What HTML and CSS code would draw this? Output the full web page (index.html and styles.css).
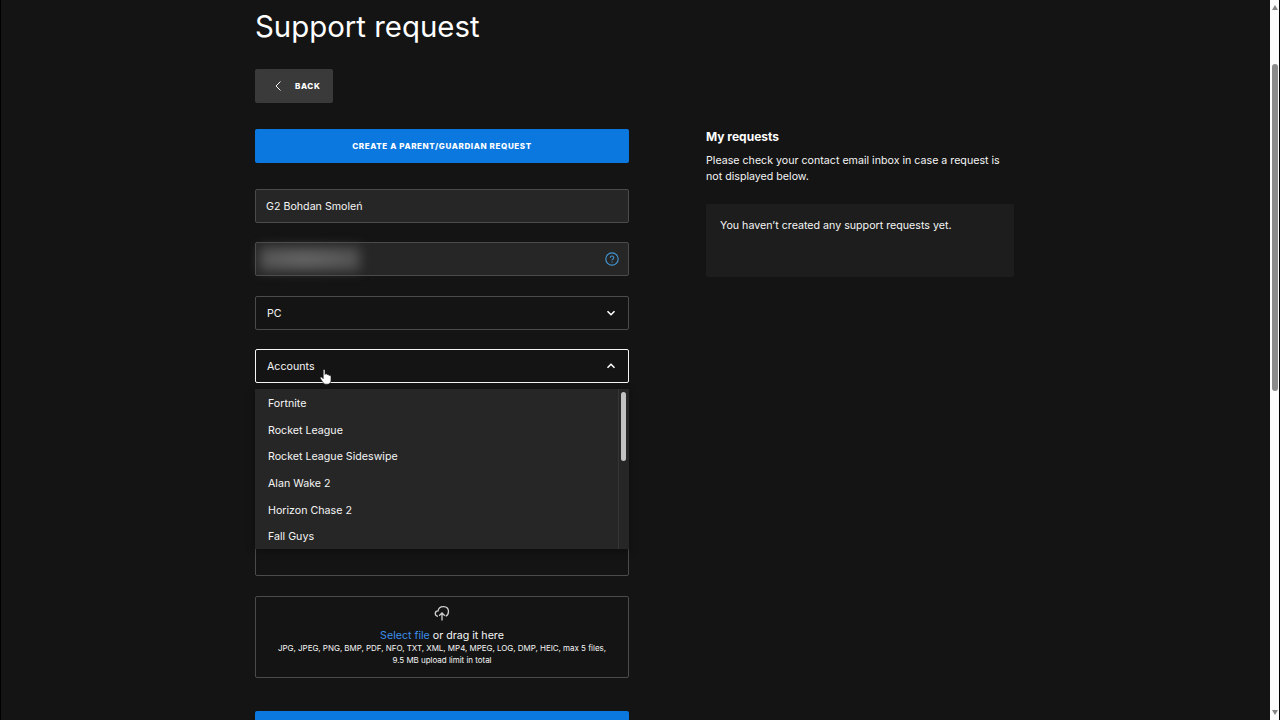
FILE: index.html
```html
<!DOCTYPE html>
<html lang="en">
  <head>
    <meta charset="UTF-8" />
    <meta name="viewport" content="width=device-width, initial-scale=1.0" />
    <title>Support request</title>
    <link rel="stylesheet" href="styles.css" />
  </head>
  <body>
    <div class="window">
      <main class="page">
        <h1 class="heading">Support request</h1>
        <button type="button" class="back-button">
          <svg class="back-icon" viewBox="0 0 8 12"><path d="M6.500 1.500 2 6l4.500 4.500" /></svg>
          <span>BACK</span>
        </button>

        <div class="columns">
          <form class="request-form">
            <button type="button" class="primary-button">CREATE A PARENT/GUARDIAN REQUEST</button>
            <div class="field filled">
              <span>G2 Bohdan Smoleń</span>
            </div>
            <div class="field filled">
              <div class="redacted"></div>
              <svg class="help-icon" viewBox="0 0 14 14">
                <circle cx="7" cy="7" r="6.200" />
                <path d="M5.300 5.700a1.700 1.700 0 1 1 2.500 1.500c-.6.300-.8.500-.8 1.100M7 9.500v1" />
              </svg>
            </div>
            <div class="field select">
              <span>PC</span>
              <svg class="chevron" viewBox="0 0 10 8"><path d="M1.500 2.300 5 5.700l3.500-3.400" /></svg>
            </div>
            <div class="field select open">
              <span>Accounts</span>
              <svg class="chevron" viewBox="0 0 10 8"><path d="M1.500 5.700 5 2.300l3.500 3.400" /></svg>
              <div class="menu">
                <ul class="options">
                  <li>Fortnite</li>
                  <li>Rocket League</li>
                  <li>Rocket League Sideswipe</li>
                  <li>Alan Wake 2</li>
                  <li>Horizon Chase 2</li>
                  <li>Fall Guys</li>
                </ul>
                <div class="menu-scroll"><div class="menu-thumb"></div></div>
              </div>
              <svg class="cursor" viewBox="0 0 12 16">
                <path d="M3.200 1.300c0-1.200 1.800-1.200 1.800 0v4.200l.3-.7c1-.4 1.700 0 1.800.8.900-.4 1.700 0 1.900.8 1.100-.3 2 .3 2 1.400v3.400c0 2.400-1.400 4-3.700 4H6c-1.500 0-2.300-.6-3.200-2L.4 9.600c-.7-1.200.8-2 1.600-1.100l1.200 1.200z" />
              </svg>
            </div>
            <div class="field"></div>
            <div class="field textarea"></div>
            <div class="upload">
              <svg class="upload-icon" viewBox="0 0 16 16">
                <path d="M4 10.800C.2 10.300.5 5.300 4.100 5.300 5-.4 14.500-.2 14.500 6c0 2-1 3.800-2.800 4.800M8 15V7.500M5.200 10.200 8 7.400l2.800 2.800" />
              </svg>
              <p class="upload-text"><span class="link">Select file</span> or drag it here</p>
              <p class="upload-hint">JPG, JPEG, PNG, BMP, PDF, NFO, TXT, XML, MP4, MPEG, LOG, DMP, HEIC, max 5 files,<br />9.5 MB upload limit in total</p>
            </div>
            <button type="button" class="primary-button submit" aria-label="Submit"></button>
          </form>

          <aside class="requests">
            <h2>My requests</h2>
            <p>Please check your contact email inbox in case a request is<br />not displayed below.</p>
            <div class="requests-empty">You haven’t created any support requests yet.</div>
          </aside>
        </div>
      </main>

      <div class="scrollbar">
        <svg class="arrow" viewBox="0 0 6 5"><path d="M3 0l3 5H0z" /></svg>
        <div class="track"><div class="thumb"></div></div>
        <svg class="arrow" viewBox="0 0 6 5"><path d="M3 5l3-5H0z" /></svg>
      </div>
    </div>
  </body>
</html>
```
FILE: styles.css
```css
* {
  box-sizing: border-box;
}
body {
  margin: 0;
  background-color: #141414;
  color: #f5f5f5;
  font-family: Inter, "Liberation Sans", sans-serif;
  font-size: 10.67px;
  overflow: hidden;
}
h1,
h2,
p,
ul {
  margin: 0;
  padding: 0;
}
svg {
  display: block;
  fill: none;
  flex: none;
}
button {
  border: 0;
  padding: 0;
  color: #ffffff;
  font-family: inherit;
  font-size: 8px;
  font-weight: 800;
}
.window {
  display: flex;
  height: 720px;
  border-left: 1px solid #000000;
  border-right: 1px solid #000000;
  overflow: hidden;
}
.page {
  flex: 1;
  padding: 6px 0 0 254px;
}
.heading {
  height: 63px;
  color: #ffffff;
  font-size: 29.4px;
  font-weight: 400;
  line-height: 41px;
}
.back-button {
  display: flex;
  align-items: center;
  gap: 13px;
  width: 78px;
  height: 34px;
  padding-left: 19px;
  border-radius: 2px;
  background-color: #3a3a3a;
  letter-spacing: 0.62px;
}
.back-icon {
  width: 8px;
  height: 12px;
  stroke: #f5f5f5;
}
.columns {
  display: flex;
  align-items: flex-start;
  gap: 77px;
  margin-top: 26px;
}
.request-form {
  display: flex;
  flex-direction: column;
  gap: 19.33px;
  width: 374px;
}
.primary-button {
  height: 34px;
  margin-bottom: 6.67px;
  border-radius: 2px;
  background-color: #0b78df;
  letter-spacing: 0.62px;
}
.field {
  display: flex;
  position: relative;
  align-items: center;
  justify-content: space-between;
  height: 34px;
  padding: 0 12px 0 11px;
  border: 1px solid #4b4b4b;
  border-radius: 2px;
}
.field span {
  padding-top: 1px;
}
.filled {
  padding: 0 9px 0 10px;
  background-color: #262626;
}
.open {
  z-index: 1;
  border-color: #f5f5f5;
}
.textarea {
  height: 120.67px;
}
/* blurred out email address */
.redacted {
  width: 100px;
  height: 24px;
  margin-left: -6px;
  background: radial-gradient(ellipse at 45% 50%, #686868, #484848);
  filter: blur(6px);
}
.help-icon {
  width: 14px;
  height: 14px;
  stroke: #4193cf;
  stroke-width: 1.2;
}
.chevron {
  width: 10px;
  height: 8px;
  stroke: #ffffff;
  stroke-width: 1.6;
}
.menu {
  display: flex;
  position: absolute;
  top: 39px;
  left: -1px;
  width: 374px;
  height: 160px;
  background-color: #262626;
  box-shadow: 0 2px 8px rgba(0, 0, 0, 0.35);
}
.options {
  flex: 1;
  padding-top: 1px;
  padding-left: 13px;
  list-style: none;
}
.options li {
  height: 26.67px;
  line-height: 27px;
}
.menu-scroll {
  width: 11px;
  padding: 3px 3px 0 2px;
  border-left: 1px solid #353535;
}
.menu-thumb {
  width: 5px;
  height: 69px;
  border-radius: 3px;
  background-color: #c1c1c1;
}
.cursor {
  position: absolute;
  top: 19px;
  left: 64px;
  width: 12px;
  height: 16px;
  fill: #ffffff;
  stroke: #111111;
  stroke-width: 0.6;
}
.upload {
  display: flex;
  flex-direction: column;
  align-items: center;
  height: 82px;
  padding-top: 8px;
  border: 1px solid #4b4b4b;
  border-radius: 2px;
  text-align: center;
}
.upload-icon {
  width: 16px;
  height: 17px;
  stroke: #d0d0d0;
  stroke-width: 1.3;
}
.upload-text {
  margin-top: 6px;
  line-height: 16px;
}
.link {
  color: #3b8eea;
}
.upload-hint {
  margin-top: -2px;
  font-size: 8px;
  line-height: 12px;
  letter-spacing: -0.03px;
}
.submit {
  flex: none;
  margin-top: 13.67px;
}
.requests {
  width: 308px;
  line-height: 16px;
}
.requests h2 {
  height: 24px;
  color: #ffffff;
  font-size: 12px;
  font-weight: 700;
}
.requests-empty {
  height: 73px;
  margin-top: 19px;
  padding: 14px;
  border-radius: 2px;
  background-color: #1d1d1d;
}
.scrollbar {
  display: flex;
  flex-direction: column;
  align-items: center;
  width: 9px;
  padding: 5px 0;
  background-color: #fcfcfc;
}
.arrow {
  width: 6px;
  height: 5px;
  fill: #858585;
}
.track {
  flex: 1;
  padding-top: 54px;
}
.thumb {
  width: 6px;
  height: 327px;
  border-radius: 3px;
  background-color: #8b8b8b;
}
```
